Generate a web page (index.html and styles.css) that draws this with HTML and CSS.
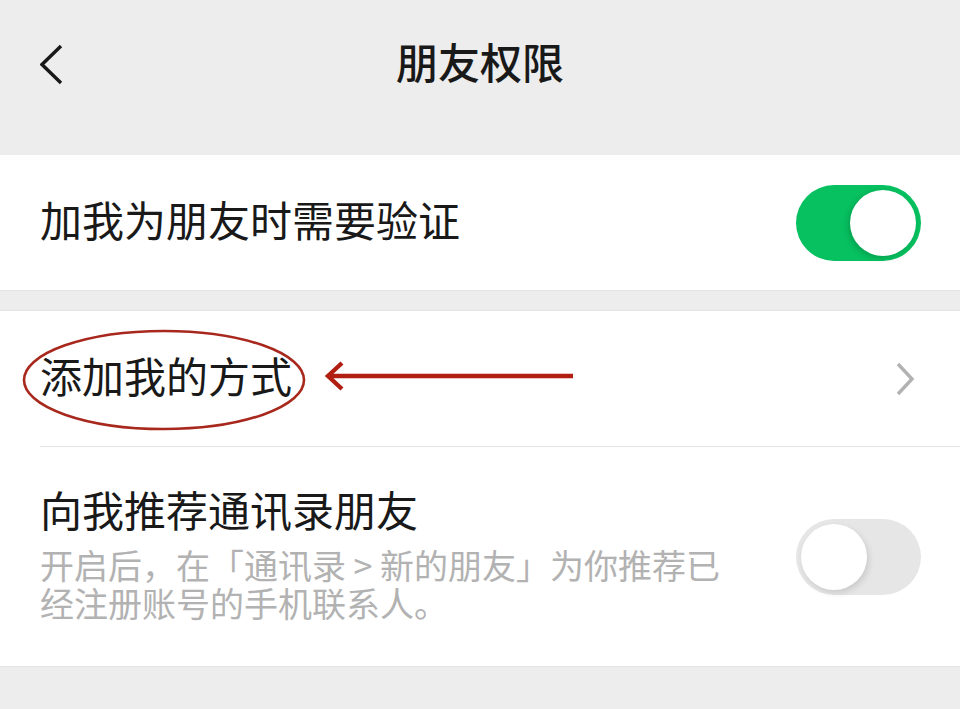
FILE: index.html
```html
<!DOCTYPE html>
<html lang="zh-CN">
    <head>
        <meta charset="utf-8">
        <title>朋友权限</title>
        <link rel="stylesheet" href="styles.css">
    </head>
    <body>
        <div class="navbar">
            <svg class="nav-back" width="24" height="42" viewBox="0 0 24 42">
                <polyline points="21,2 2,20.5 21,39"/>
            </svg>
            <div class="nav-title">朋友权限</div>
            <div></div>
        </div>

        <div class="group first">
            <div class="cell">
                <div class="cell-label">加我为朋友时需要验证</div>
                <span class="switch switch-on"></span>
            </div>
        </div>

        <div class="group">
            <div class="cell">
                <div class="cell-label">添加我的方式</div>
                <svg class="cell-arrow" width="20" height="34" viewBox="0 0 20 34">
                    <polyline points="2,2 16,17 2,32"/>
                </svg>
            </div>
            <div class="cell cell-tall">
                <div class="cell-body">
                    <div class="cell-label">向我推荐通讯录朋友</div>
                    <div class="cell-note">开启后，在「通讯录 &gt; 新的朋友」为你推荐已<br>经注册账号的手机联系人。</div>
                </div>
                <span class="switch"></span>
            </div>

            <!-- annotation drawn over the first row -->
            <svg class="mark" width="960" height="136" viewBox="0 0 960 136">
                <ellipse cx="164" cy="69" rx="140" ry="49"/>
                <line x1="328" y1="65" x2="573" y2="65"/>
                <polyline points="342,52 328,65 342,78"/>
            </svg>
        </div>
    </body>
</html>
```

FILE: styles.css
```css
body {
    margin: 0;
    background-color: #ededed;
    font-family: "Noto Sans CJK SC", "Noto Sans", sans-serif;
    color: #191919;
}

.navbar {
    height: 130px;
    display: grid;
    grid-template-columns: 1fr auto 1fr;
    align-items: center;
    padding-left: 40px;
}

.nav-back {
    display: block;
    fill: none;
    stroke: #191919;
    stroke-width: 3.4;
}

.nav-title {
    font-size: 42px;
    font-weight: 500;
    margin-left: -40px;
    margin-bottom: 10px;
}

.group {
    position: relative;
    background-color: white;
    padding-left: 40px;
    border-bottom: 1px solid #e3e3e3;
}

.group.first {
    margin-top: 25px;
}

.group + .group {
    margin-top: 19px;
    border-top: 1px solid #e3e3e3;
}

.cell {
    height: 135px;
    display: flex;
    align-items: center;
    justify-content: space-between;
    padding-right: 39px;
}

.cell + .cell {
    border-top: 1px solid #e5e5e5;
}

.cell-tall {
    height: auto;
    padding-top: 32px;
    padding-bottom: 44px;
}

.cell-tall .switch {
    margin-top: 12px;
}

.cell-label {
    font-size: 42px;
    line-height: 60px;
}

.cell > .cell-label {
    padding-bottom: 7px;
}

.cell-note {
    margin-top: 7px;
    font-size: 34px;
    line-height: 38px;
    color: #b2b2b2;
}

.cell-arrow {
    display: block;
    margin-right: 5px;
    fill: none;
    stroke: #b2b2b2;
    stroke-width: 3.4;
}

.switch {
    position: relative;
    flex: none;
    width: 125px;
    height: 76px;
    border-radius: 38px;
    background-color: #e6e6e6;
}

.switch::after {
    content: "";
    position: absolute;
    top: 5px;
    left: 5px;
    width: 66px;
    height: 66px;
    border-radius: 50%;
    background-color: white;
    box-shadow: 2px 3px 6px rgba(0, 0, 0, 0.12);
}

.switch-on {
    background-color: #07c160;
}

.switch-on::after {
    left: 54px;
    box-shadow: -2px 2px 6px rgba(0, 0, 0, 0.18);
}

.mark {
    position: absolute;
    left: 0;
    top: 0;
    fill: none;
    stroke: #b01f12;
}

.mark ellipse {
    stroke-width: 2.6;
    stroke: #a8281d;
}

.mark line,
.mark polyline {
    stroke-width: 4.4;
}
```
